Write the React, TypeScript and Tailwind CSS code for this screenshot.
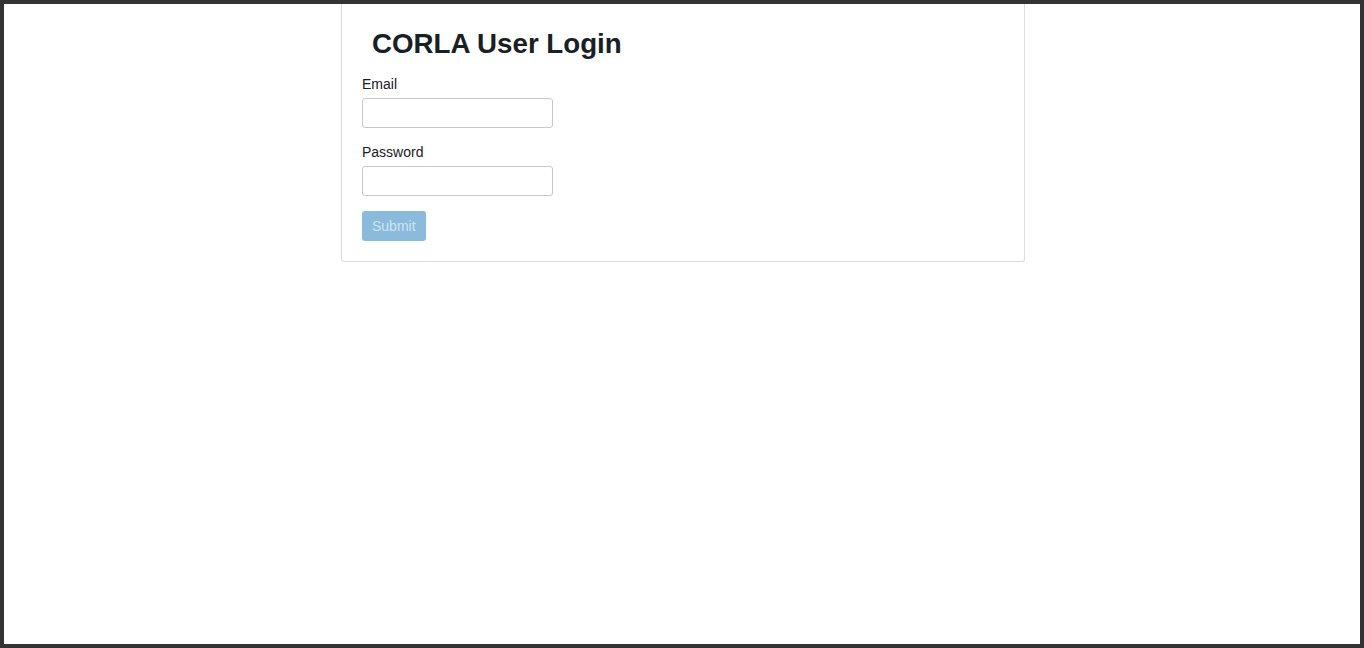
import React from 'react';

const App = () => {
  const [email, setEmail] = React.useState('');
  const [password, setPassword] = React.useState('');
  const canSubmit = email.length > 0 && password.length > 0;

  return (
    <div className="h-[648px] w-full border-4 border-[#333333] bg-white font-['Liberation_Sans',Arial,sans-serif] text-[#182026]">
      <div className="ml-[337px] w-[684px] rounded-b-[3px] border border-t-0 border-[#dcdcdc] px-5 pt-[24px] pb-5">
        <h2 className="mb-[15px] pl-[10px] text-[27.7px] font-bold leading-8">CORLA User Login</h2>
        <label className="mb-[15px] block">
          <div className="mb-[5px] text-sm leading-[18px]">Email</div>
          <input
            type="text"
            value={email}
            onChange={(e) => setEmail(e.target.value)}
            className="h-[30px] w-[191px] rounded-[3px] border border-[#c8c8c8] px-2 text-sm outline-none"
          />
        </label>
        <label className="mb-[15px] block">
          <div className="mb-[5px] text-sm leading-[18px]">Password</div>
          <input
            type="password"
            value={password}
            onChange={(e) => setPassword(e.target.value)}
            className="h-[30px] w-[191px] rounded-[3px] border border-[#c8c8c8] px-2 text-sm outline-none"
          />
        </label>
        <button
          disabled={!canSubmit}
          className="block h-[30px] rounded-[3px] bg-[#8abbdc] px-[10px] text-sm text-white/60"
        >
          Submit
        </button>
      </div>
    </div>
  );
};

export default App;
